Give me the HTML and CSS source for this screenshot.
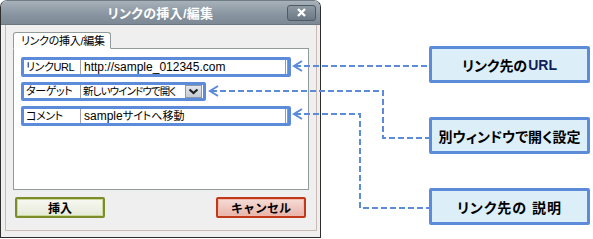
FILE: index.html
```html
<!DOCTYPE html>
<html lang="ja">
<head>
<meta charset="UTF-8" />
<title>リンクの挿入/編集</title>
<link rel="stylesheet" href="styles.css">
</head>
<body>

<div class="page">
  <div class="dialog">
    <div class="titlebar">
      <span></span>
      <span class="title">リンクの挿入/編集</span>
      <span class="close">
        <svg width="11" height="9" viewBox="0 0 11 9"><path d="M2 1 L9 8 M9 1 L2 8" stroke="#fff" stroke-width="2.4"/></svg>
      </span>
    </div>
    <div class="frame">
      <div class="tab">リンクの挿入/編集</div>
      <div class="panel">
        <div class="field wide">
          <span class="lbl">リンクURL</span>
          <span class="val">http://sample_012345.com</span>
        </div>
        <div class="field narrow">
          <span class="lbl">ターゲット</span>
          <span class="val sel">新しいウインドウで開く</span>
          <span class="drop">
            <svg width="11" height="7" viewBox="0 0 11 7"><path d="M1.5 1.5 L5.5 5 L9.5 1.5" fill="none" stroke="#222" stroke-width="2.2"/></svg>
          </span>
        </div>
        <div class="field wide">
          <span class="lbl">コメント</span>
          <span class="val">sample<span class="ja">サイトへ移動</span></span>
        </div>
      </div>
      <div class="buttons">
        <button class="btn insert">挿入</button>
        <button class="btn cancel">キャンセル</button>
      </div>
    </div>
  </div>

  <div class="notes">
    <div class="note">リンク先の<span class="latin">URL</span></div>
    <div class="note">別ウィンドウで開く設定</div>
    <div class="note spaced">リンク先の 説明</div>
  </div>
</div>

<!-- connector lines -->
<svg class="links" width="593" height="239" viewBox="0 0 593 239">
  <g fill="none" stroke="#5b8bd9" stroke-width="2">
    <g stroke-dasharray="6 3">
      <path d="M295 66 H430" />
      <path d="M211 91 H383 V138 H430" />
      <path d="M295 114 H360 V208 H430" />
    </g>
    <polyline points="302,61 294,66 302,71" />
    <polyline points="218,86 210,91 218,96" />
    <polyline points="302,109 294,114 302,119" />
  </g>
</svg>

</body>
</html>
```

FILE: styles.css
```css
body { margin: 0; background: #fff; font-family: "Liberation Sans", "Noto Sans CJK JP", sans-serif; font-feature-settings: "palt"; color: #000; }
.page { display: flex; align-items: flex-start; }

.dialog { width: 321px; height: 238px; box-sizing: border-box; border: 1px solid #2e2e2e; border-top-color: #6f7c86; border-radius: 7px 7px 0 0; background: #efefef; display: flex; flex-direction: column; overflow: hidden; }
.titlebar { height: 23px; display: grid; grid-template-columns: 1fr auto 1fr; align-items: center; background: linear-gradient(#a6b1b9, #8894a0 60%, #7c8893); border-bottom: 1px solid #6a7680; }
.title { color: #fff; font-weight: bold; font-size: 13px; letter-spacing: 0.3px; }
.close { justify-self: end; margin-right: 4px; width: 27px; height: 14px; border: 1px solid #4e5a64; border-radius: 3px; background: linear-gradient(#8d99a3, #6c7883); display: flex; align-items: center; justify-content: center; }

.frame { flex: 1; margin: 0 3px 6px 4px; border: 1px solid #cbbab4; border-top: none; padding: 7px 7px 0 7px; display: flex; flex-direction: column; }
.tab { align-self: flex-start; width: 98px; box-sizing: border-box; height: 17px; margin-bottom: -1px; padding-left: 7px; font-size: 11px; line-height: 16px; letter-spacing: -0.3px; white-space: nowrap; background: #fff; border: 1px solid #919b9c; border-bottom-color: #fff; border-radius: 3px 3px 0 0; position: relative; }
.panel { height: 142px; box-sizing: border-box; background: #fff; border: 1px solid #919b9c; padding: 8px 0 0 7px; display: flex; flex-direction: column; gap: 5px; }

.field { display: flex; align-items: stretch; height: 14px; border: 3px solid #5b8bd9; border-radius: 2px; background: #fff; font-size: 12px; line-height: 14px; }
.field.wide { width: 264px; }
.field.narrow { width: 179px; height: 13px; line-height: 13px; }
.lbl { width: 57px; box-sizing: border-box; padding-left: 2px; border-right: 1px solid #a0a0a0; white-space: nowrap; font-size: 11px; letter-spacing: -0.4px; overflow: hidden; }
.val { flex: 1; padding-left: 3px; border-right: 3px double #9a9a9a; white-space: nowrap; overflow: hidden; }
.val .ja { font-size: 11px; }
.val.sel { border-right: none; padding-left: 2px; font-size: 10.5px; letter-spacing: -0.9px; }
.drop { flex: none; width: 15px; margin: 0 1px; border: 1px solid #8a9aa8; background: linear-gradient(#e2e6ec, #c4cbd4); display: flex; align-items: center; justify-content: center; }

.buttons { display: flex; justify-content: space-between; margin-top: 7px; padding: 0 3px 0 2px; }
.btn { width: 90px; height: 21px; font-family: inherit; font-size: 12px; font-weight: bold; padding: 0; border-radius: 2px; cursor: pointer; }
.btn.insert { border: 2px solid #7c8c2a; box-shadow: inset 0 0 0 1px #c9d89a; background: linear-gradient(#f8f8f2, #e6ead8); }
.btn.cancel { border: 2px solid #c0391b; box-shadow: inset 0 0 0 1px #f0b8a8; background: linear-gradient(#f6dcd6, #e8b4aa); }

.notes { margin-left: 108px; padding-top: 46px; display: flex; flex-direction: column; gap: 34px; }
.note { width: 161px; height: 37px; box-sizing: border-box; border: 3px solid #5b8bd9; border-radius: 2px; background: #dceef7; font-size: 14px; font-weight: bold; display: flex; align-items: center; justify-content: center; }
.note .latin { color: #10205a; font-size: 14px; margin-left: 1px; }
.note.spaced { letter-spacing: 1px; }

.links { position: absolute; left: 0; top: 0; pointer-events: none; }
```
